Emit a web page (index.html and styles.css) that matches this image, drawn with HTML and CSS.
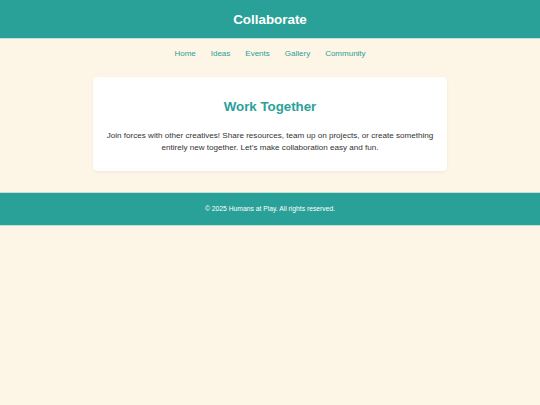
FILE: index.html
```html
<!DOCTYPE html>
<html lang="en">
<head>
<meta charset="utf-8">
<title>Collaborate</title>
<link rel="stylesheet" href="styles.css">
</head>
<body>
<header class="site-header">
  <h1 class="site-title">Collaborate</h1>
</header>
<nav class="site-nav">
  <a href="#">Home</a>
  <a href="#">Ideas</a>
  <a href="#">Events</a>
  <a href="#">Gallery</a>
  <a href="#">Community</a>
</nav>
<main class="content">
  <section class="card">
    <h2 class="card-title">Work Together</h2>
    <p class="card-text">Join forces with other creatives! Share resources, team up on projects, or create something entirely new together. Let’s make collaboration easy and fun.</p>
  </section>
</main>
<footer class="site-footer">
  <p>© 2025 Humans at Play. All rights reserved.</p>
</footer>
</body>
</html>
```

FILE: styles.css
```css
html, body {
  margin: 0;
  padding: 0;
}
body {
  background: #fdf5e6;
  font-family: "Liberation Sans", Arial, sans-serif;
  color: #333;
}
.site-header {
  background: #2aa198;
  height: 38px;
  border-bottom: 1px solid #bfe3d6;
  display: flex;
  align-items: center;
  justify-content: center;
}
.site-title {
  margin: 0;
  color: #fff;
  font-size: 13.4px;
  font-weight: bold;
}
.site-nav {
  display: flex;
  justify-content: center;
  gap: 15px;
  padding: 8px 0 0;
  height: 23px;
}
.site-nav a {
  color: #2aa198;
  text-decoration: none;
  font-size: 8px;
  line-height: 13px;
}
.content {
  display: flex;
  justify-content: center;
  padding: 7px 0 21px;
}
.card {
  width: 354px;
  box-sizing: border-box;
  background: #fff;
  border-radius: 4px;
  box-shadow: 0 1px 3px rgba(0, 0, 0, 0.06);
  padding: 21px 12px 17px;
  text-align: center;
}
.card-title {
  margin: 0 0 15px;
  color: #2aa198;
  font-size: 13.3px;
  line-height: 17px;
  font-weight: bold;
}
.card-text {
  margin: 0;
  font-size: 8.1px;
  line-height: 11.8px;
  color: #333;
}
.site-footer {
  background: #2aa198;
  border-top: 1px solid #bfe3d6;
  border-bottom: 1px solid #bfe3d6;
  height: 32px;
  display: flex;
  align-items: center;
  justify-content: center;
}
.site-footer p {
  margin: 0;
  color: #fff;
  font-size: 6.75px;
}
```
